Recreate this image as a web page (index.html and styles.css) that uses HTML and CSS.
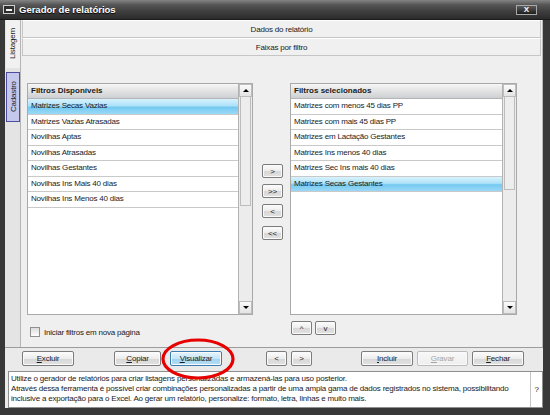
FILE: index.html
```html
<!DOCTYPE html>
<html lang="pt">
<head>
    <meta charset="UTF-8">
    <title>Gerador de relatórios</title>
    <link rel="stylesheet" href="styles.css">
</head>
<body>
    <div class="window">
        <div class="titlebar">
            <span class="sys-icon"></span>
            <span class="title">Gerador de relatórios</span>
            <span class="close">X</span>
        </div>

        <div class="frame">
            <div class="upper">
                <div class="tabs">
                    <div class="tab">Listagem</div>
                    <div class="tab active">Cadastro</div>
                </div>

                <div class="main">
                    <div class="band">Dados do relatório</div>
                    <div class="band">Faixas por filtro</div>

                    <div class="panel">
                        <div class="lists">
                            <div class="listbox left">
                                <div class="list">
                                    <div class="list-head">Filtros Disponíveis</div>
                                    <div class="row selected">Matrizes Secas Vazias</div>
                                    <div class="row">Matrizes Vazias Atrasadas</div>
                                    <div class="row">Novilhas Aptas</div>
                                    <div class="row">Novilhas Atrasadas</div>
                                    <div class="row">Novilhas Gestantes</div>
                                    <div class="row">Novilhas Ins Mais 40 dias</div>
                                    <div class="row">Novilhas Ins Menos 40 dias</div>
                                </div>
                                <div class="scrollbar">
                                    <div class="sb-btn up"></div>
                                    <div class="sb-thumb long"></div>
                                    <div class="sb-track"></div>
                                    <div class="sb-btn down"></div>
                                </div>
                            </div>

                            <div class="movers">
                                <button class="btn">&gt;</button>
                                <button class="btn">&gt;&gt;</button>
                                <button class="btn">&lt;</button>
                                <button class="btn wide-gap">&lt;&lt;</button>
                            </div>

                            <div class="listbox right">
                                <div class="list">
                                    <div class="list-head">Filtros selecionados</div>
                                    <div class="row">Matrizes com menos 45 dias PP</div>
                                    <div class="row">Matrizes com mais 45 dias PP</div>
                                    <div class="row">Matrizes em Lactação Gestantes</div>
                                    <div class="row">Matrizes Ins menos 40 dias</div>
                                    <div class="row">Matrizes Sec Ins mais 40 dias</div>
                                    <div class="row selected">Matrizes Secas Gestantes</div>
                                </div>
                                <div class="scrollbar">
                                    <div class="sb-btn up"></div>
                                    <div class="sb-thumb short"></div>
                                    <div class="sb-track"></div>
                                    <div class="sb-btn down"></div>
                                </div>
                            </div>
                        </div>

                        <div class="below">
                            <label class="check"><span class="box"></span>Iniciar filtros em nova página</label>
                            <div class="updown">
                                <button class="btn">^</button>
                                <button class="btn">v</button>
                            </div>
                        </div>
                    </div>
                </div>
            </div>

            <div class="footer">
                <div class="toolbar">
                    <button class="tb"><u>E</u>xcluir</button>
                    <button class="tb copiar"><u>C</u>opiar</button>
                    <button class="tb visualizar"><u>V</u>isualizar</button>
                    <button class="tb small prev">&lt;</button>
                    <button class="tb small next">&gt;</button>
                    <button class="tb incluir"><u>I</u>ncluir</button>
                    <button class="tb gravar" disabled><u>G</u>ravar</button>
                    <button class="tb fechar"><u>F</u>echar</button>
                </div>
                <div class="help">
                    <div class="help-text">
                        <p>Utilize o gerador de relatórios para criar listagens personalizadas e armazená-las para uso posterior.</p>
                        <p>Através dessa ferramenta é possível criar combinações personalizadas a partir de uma ampla gama de dados registrados no sistema, possibilitando</p>
                        <p>inclusive a exportação para o Excel. Ao gerar um relatório, personalize: formato, letra, linhas e muito mais.</p>
                    </div>
                    <div class="help-q">?</div>
                </div>
            </div>
        </div>

        <!-- highlight drawn over the toolbar -->
        <svg class="mark" width="80" height="46" viewBox="0 0 80 46">
            <ellipse cx="40" cy="23" rx="35" ry="19" fill="none" stroke="#e60000" stroke-width="3.2"/>
        </svg>
    </div>
</body>
</html>
```

FILE: styles.css
```css
* {
    margin: 0;
    padding: 0;
    box-sizing: border-box;
}

body {
    background: #fff;
    font-family: "Liberation Sans", Arial, sans-serif;
    font-size: 8px;
    letter-spacing: -0.2px;
    color: #1b1b1b;
}

.window {
    position: relative;
    width: 550px;
    height: 415px;
    display: flex;
    flex-direction: column;
    background: #383838;
}

/* title bar */
.titlebar {
    height: 20px;
    display: flex;
    align-items: center;
    padding: 0 13px 0 3px;
    background: linear-gradient(#858585, #565656 25%, #3e3e3e 60%, #2b2b2b);
    border-bottom: 1px solid #1a1a1a;
}

.sys-icon {
    width: 12px;
    height: 9px;
    border: 1px solid #cfcfcf;
    background: #2e2e2e;
    display: flex;
    align-items: center;
    justify-content: center;
}

.sys-icon::before {
    content: "";
    width: 6px;
    height: 2px;
    background: #f2f2f2;
}

.title {
    margin-left: 4px;
    color: #fff;
    font-size: 9.5px;
    font-weight: bold;
    letter-spacing: 0;
    text-shadow: 0 1px 1px #000;
}

.close {
    margin-left: auto;
    width: 21px;
    height: 10px;
    border: 1px solid #a8a8a8;
    background: linear-gradient(#5a5a5a, #1e1e1e);
    color: #fff;
    font-weight: bold;
    font-size: 8px;
    line-height: 8px;
    text-align: center;
    letter-spacing: 0;
}

/* body of the window */
.frame {
    flex: 1;
    display: flex;
    flex-direction: column;
    padding: 0 7px 7px 5px;
}

.upper {
    height: 327px;
    display: flex;
    background: #e4e4e4;
}

.tabs {
    width: 16px;
    padding-left: 1px;
    border-right: 1px solid #b4b4b4;
    display: flex;
    flex-direction: column;
}

.tab {
    width: 14px;
    height: 48px;
    writing-mode: vertical-rl;
    transform: rotate(180deg);
    text-align: center;
    line-height: 13px;
    background: #f1f1f1;
}

.tab.active {
    margin-top: 4px;
    height: 50px;
    border: 1px solid #4c4ca2;
    background: #c5c8eb;
}

.main {
    flex: 1;
    display: flex;
    flex-direction: column;
    background: #efefef;
    border-right: 1px solid #b8b8b8;
}

.band {
    height: 18px;
    line-height: 17px;
    text-align: center;
    margin: 0 1px;
    background: #f0f0f0;
    border: 1px solid #c6c6c6;
    border-top-color: #fff;
}

.panel {
    flex: 1;
    padding: 27px 0 0 6px;
}

.lists {
    display: flex;
    height: 232px;
}

.listbox {
    display: flex;
    background: #fff;
    border: 1px solid #a9a9a9;
}

.listbox.left {
    width: 226px;
}

.listbox.right {
    width: 227px;
}

.list {
    flex: 1;
}

.list-head {
    height: 15px;
    line-height: 14px;
    padding-left: 3px;
    font-weight: bold;
    letter-spacing: 0;
    background: linear-gradient(#f6f6f6, #e2e2e2 50%, #cdd0d3);
    border-bottom: 1px solid #b4b4b4;
}

.row {
    height: 15.5px;
    line-height: 14.5px;
    padding-left: 3px;
    white-space: nowrap;
    border-bottom: 1px solid #c9c9c9;
}

.row.selected {
    background: linear-gradient(#d8f2fd, #aee2f9 45%, #74c9f1 55%, #9ad9f6);
}

.scrollbar {
    width: 14px;
    display: flex;
    flex-direction: column;
    background: #ececec;
    border-left: 1px solid #b2b2b2;
}

.sb-btn {
    height: 13px;
    display: flex;
    align-items: center;
    justify-content: center;
    border: 1px solid #bdbdbd;
    background: linear-gradient(#fbfbfb, #e3e3e3);
}

.sb-btn.up::before {
    content: "";
    border-left: 3px solid transparent;
    border-right: 3px solid transparent;
    border-bottom: 3px solid #000;
}

.sb-btn.down::before {
    content: "";
    border-left: 3px solid transparent;
    border-right: 3px solid transparent;
    border-top: 3px solid #000;
}

.sb-thumb {
    margin: 0 1px;
    border: 1px solid #bcbcbc;
    border-top: none;
    background: #ededed;
}

.sb-thumb.long {
    height: 109px;
}

.sb-thumb.short {
    height: 93px;
}

.sb-track {
    flex: 1;
}

/* buttons */
.btn, .tb {
    font-family: "Liberation Sans", Arial, sans-serif;
    font-size: 8px;
    letter-spacing: -0.2px;
    color: #1b1b1b;
    border: 1px solid #7c7c7c;
    border-radius: 2px;
    background: linear-gradient(#fdfdfd, #ececec 50%, #d7d7d7 51%, #e2e2e2);
    box-shadow: inset 0 0 0 1px #fafafa;
}

.btn {
    width: 21px;
    height: 14px;
    line-height: 11px;
    margin-top: 6px;
}

.movers {
    width: 37px;
    display: flex;
    flex-direction: column;
    align-items: center;
    padding: 75px 0 0 2px;
}

.movers .wide-gap {
    margin-top: 8px;
}

.below {
    display: flex;
}

.check {
    width: 263px;
    display: flex;
    align-items: center;
    padding: 12px 0 0 3px;
}

.box {
    width: 10px;
    height: 10px;
    margin-right: 4px;
    border: 1px solid #8e8f8f;
    background: linear-gradient(#dcdcdc, #fdfdfd);
}

.updown {
    display: flex;
    gap: 3px;
    padding-left: 1px;
}

/* footer */
.footer {
    flex: 1;
    display: flex;
    flex-direction: column;
    background: #eaeaea;
}

.toolbar {
    height: 22px;
    display: flex;
    align-items: center;
    padding-left: 17px;
    border-top: 1px solid #9c9c9c;
}

.tb {
    width: 52px;
    height: 15px;
}

.tb.copiar {
    width: 47px;
    margin-left: 40px;
}

.tb.visualizar {
    margin-left: 9px;
    border-color: #3b7db3;
    background: linear-gradient(#e6f5fd, #c4e6f8 50%, #9fd3f1 51%, #b6def5);
}

.tb.small {
    width: 21px;
}

.tb.prev {
    margin-left: 44px;
}

.tb.next {
    margin-left: 4px;
}

.tb.incluir {
    margin-left: 49px;
}

.tb.gravar {
    width: 51px;
    margin-left: 4px;
    color: #a6a6a6;
    border-color: #bcbcbc;
    background: linear-gradient(#f8f8f8, #eeeeee);
}

.tb.fechar {
    margin-left: 4px;
}

.help {
    flex: 1;
    display: flex;
    margin: 2px 0 0 3px;
    background: #fff;
    border: 1px solid #8f8f8f;
}

.help-text {
    flex: 1;
    padding: 2px 2px;
    line-height: 10px;
    white-space: nowrap;
    overflow: hidden;
}

.help-q {
    width: 12px;
    border-left: 1px solid #c4c4c4;
    display: flex;
    align-items: center;
    justify-content: center;
}

.mark {
    position: absolute;
    left: 158px;
    top: 336px;
}
```
